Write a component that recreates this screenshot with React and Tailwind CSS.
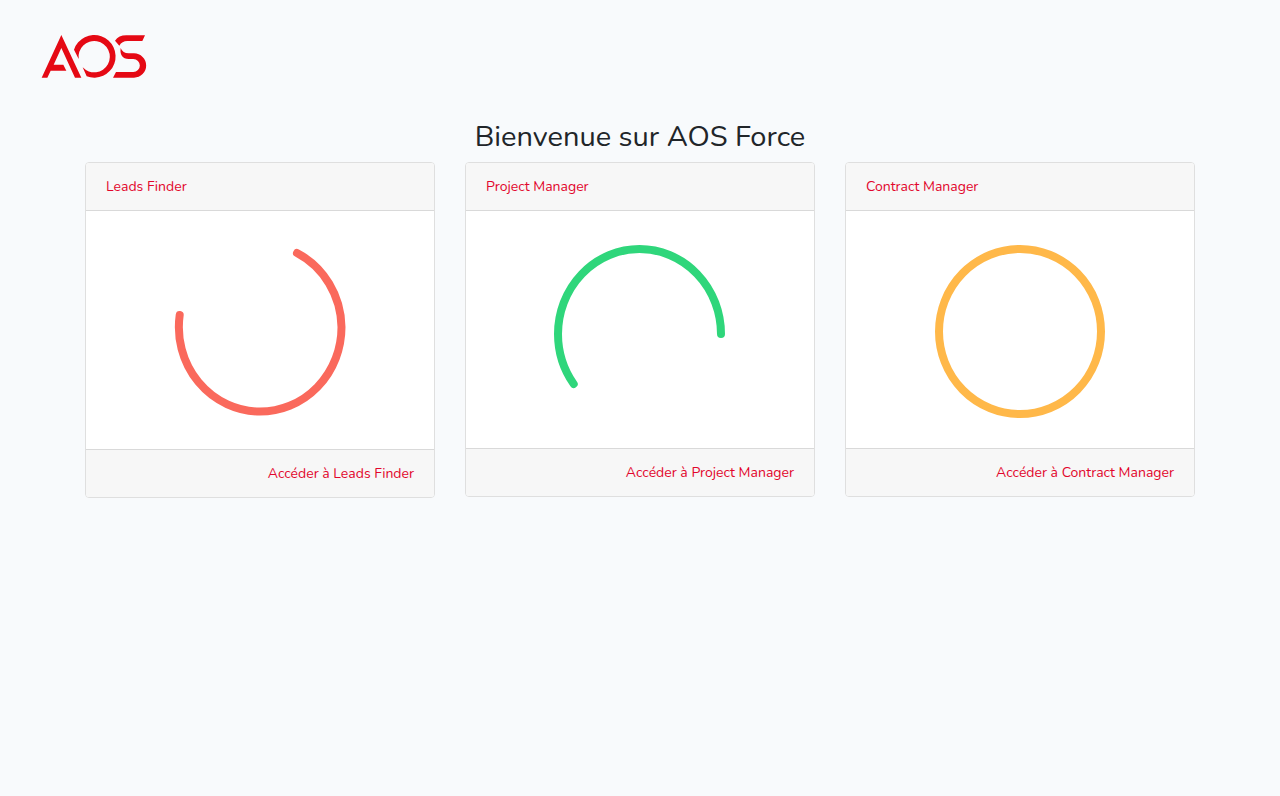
const cards = [
  { title: 'Leads Finder', stroke: '#fa695c', arc: 'M211 42 A81.6 84.5 0 0 1 255.5 116 A81.6 84.5 0 0 1 173.5 200.6 A81.6 84.5 0 0 1 93.7 104', height: 'h-[238px]' },
  { title: 'Project Manager', stroke: '#2fd67b', arc: 'M107.7 173 A81.5 85 0 0 1 92 123 A81.5 85 0 0 1 173.5 38 A81.5 85 0 0 1 255 123', height: 'h-[237px]' },
  { title: 'Contract Manager', stroke: '#ffb849', arc: 'M93 120.5 A81 82.5 0 1 1 255 120.5 A81 82.5 0 1 1 93 120.5', height: 'h-[237px]' },
];

function Logo() {
  return (
    <svg viewBox="0 0 360 174" className="h-[58px] w-[120px]" fill="#e50914" role="img" aria-label="AOS">
      <path d="M23 149 L82 21 L142 149 H123 L82 60 L59 110 H88 L97 128 H50 L40 149Z" />
      <path d="M120 65 A64 64 0 1 1 158 145 L146 118 A47 47 0 1 0 134 93Z" />
      <path d="M333 22 L325 39 H280 Q264 39 256 53 L243 38 Q254 22 277 22Z" />
      <path d="M260 60 Q266 76 284 76 H300 A36.5 36.5 0 0 1 300 149 H237 L246 132 H298 A19.5 19.5 0 0 0 298 93 H284 Q256 92 260 60Z" />
    </svg>
  );
}

export default function App() {
  return (
    <div className="min-h-screen bg-[#f8fafc] font-['Nunito','Open_Sans',sans-serif] text-[14px] leading-[23px] text-[#212529]">
      <header className="px-[34px] pt-7">
        <a href="#accueil" className="inline-block align-top"><Logo /></a>
      </header>
      <main className="mx-auto max-w-[1140px] px-[15px] pt-[34px]">
        <h1 className="mb-2 text-center text-[29px] leading-[34px]">Bienvenue sur AOS Force</h1>
        <div className="grid grid-cols-1 items-start gap-[30px] md:grid-cols-3">
          {cards.map((card) => (
            <section key={card.title} className="overflow-hidden rounded border border-[#dfdfdf] bg-white text-[#e2062c]">
              <h2 className="border-b border-[#d9d9d9] bg-[#f7f7f7] px-5 py-3">{card.title}</h2>
              <div className={`flex justify-center ${card.height}`}>
                <svg viewBox="0 0 348 238" className="h-[238px] w-[348px]" fill="none" stroke={card.stroke} strokeWidth="8" strokeLinecap="round" aria-hidden="true">
                  <path d={card.arc} />
                </svg>
              </div>
              <footer className="border-t border-[#d9d9d9] bg-[#f7f7f7] px-5 py-3 text-right">
                <a href="#acces">Accéder à {card.title}</a>
              </footer>
            </section>
          ))}
        </div>
      </main>
    </div>
  );
}
